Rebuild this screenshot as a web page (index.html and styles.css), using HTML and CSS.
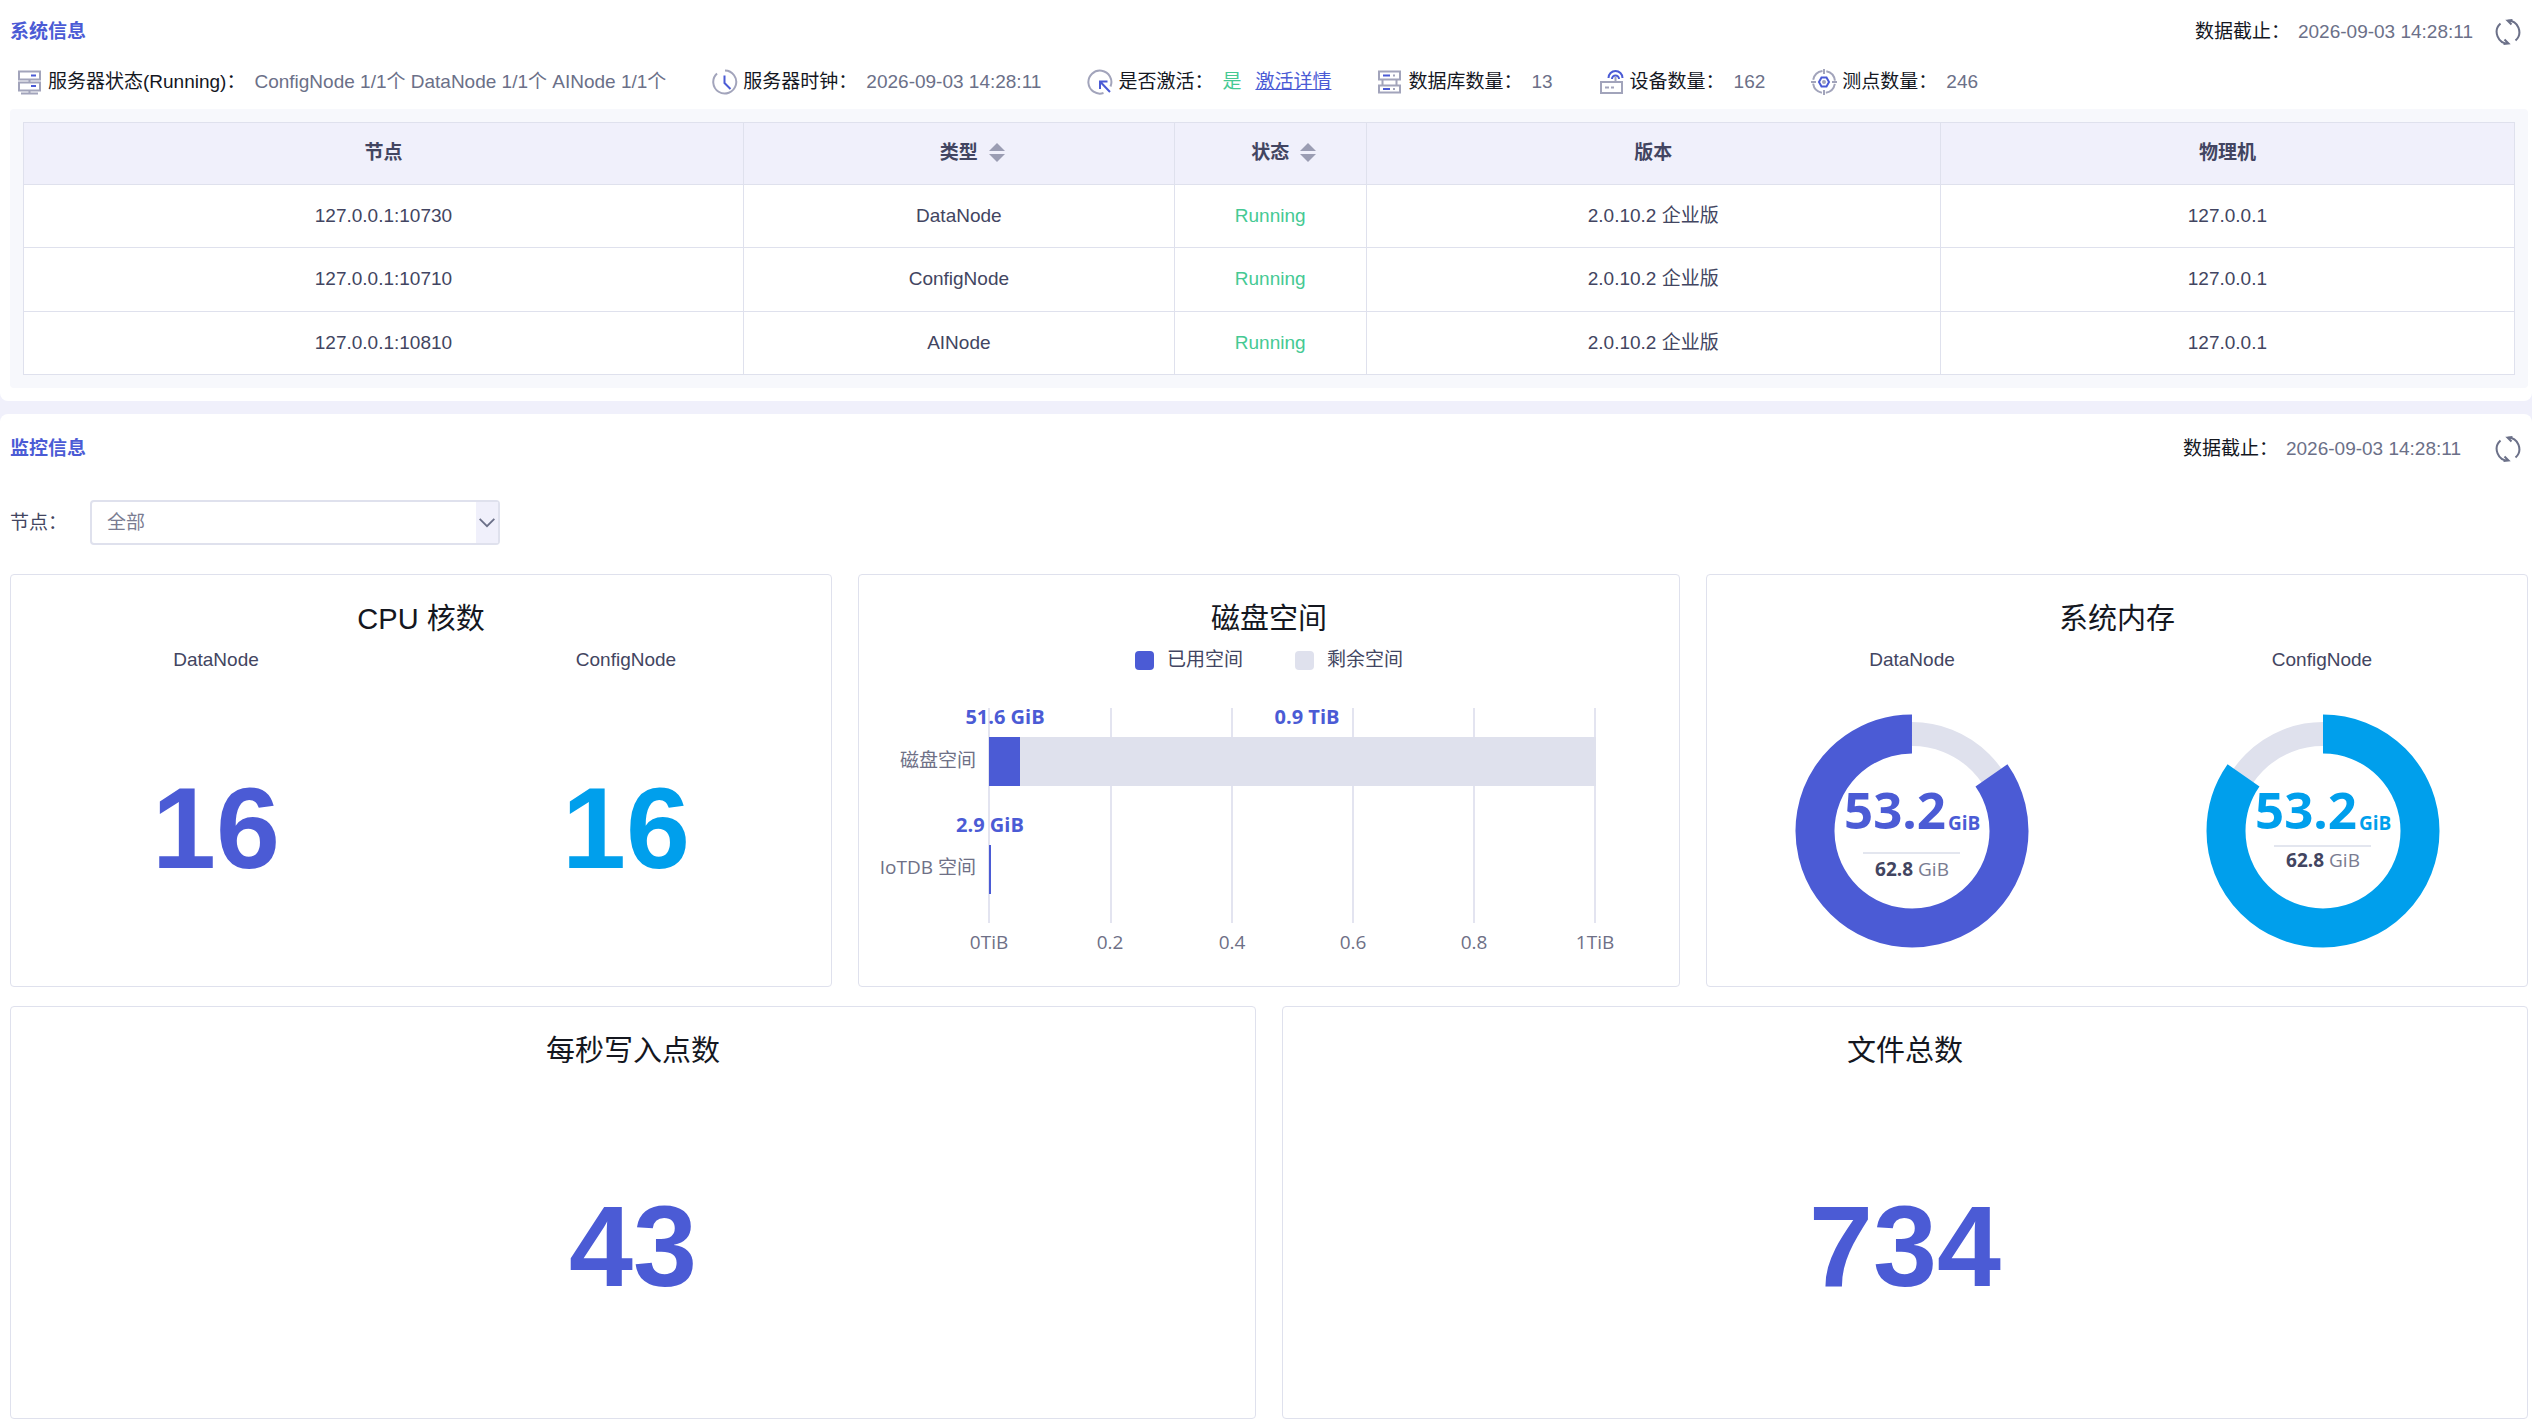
FILE: index.html
```html
<!DOCTYPE html>
<html lang="zh-CN">
<head>
  <meta charset="UTF-8">
  <meta name="viewport" content="width=device-width, initial-scale=1.0">
  <title>系统监控</title>
  <link rel="stylesheet" href="styles.css">
</head>
<body>
  <section class="panel system">
    <div class="panel-head">
      <h2>系统信息</h2>
      <div class="deadline">
        <span class="label">数据截止：</span>
        <span class="value">2026-09-03 14:28:11</span>
        <button class="refresh" type="button" aria-label="刷新">
          <svg viewBox="0 0 26 26"><path d="M5.500 4.500A11.500 11.500 0 0 0 13.500 24.500M9.500 20.500l4 4-5 .5M20.500 21.500A11.500 11.500 0 0 0 12.500 1.500M16.500 5.500l-4-4 5-.5"/></svg>
        </button>
      </div>
    </div>

    <ul class="info">
      <li>
        <svg class="icon" viewBox="0 0 26 26"><path d="M2 2.500h21v8H2zM2 13.500h21v8H2zM12.500 10.500v3M12.500 21.500v3M4 24.500h17"/><path class="accent" d="M14 6.500h5M14 17h5"/></svg>
        <span class="label">服务器状态(Running)：</span>
        <span class="value">ConfigNode 1/1个 DataNode 1/1个 AINode 1/1个</span>
      </li>
      <li>
        <svg class="icon" viewBox="0 0 26 26"><path d="M13 1.500A11.500 11.500 0 1 1 5 4.500"/><path class="accent" d="M12.500 6.500v7.500l6 6"/></svg>
        <span class="label">服务器时钟：</span>
        <span class="value">2026-09-03 14:28:11</span>
      </li>
      <li>
        <svg class="icon" viewBox="0 0 26 26"><path d="M23.500 17.500A11.500 11.500 0 1 0 16.500 24"/><path class="accent" d="M13 20v-7.500h7.500M13 12.500l10 10.500"/></svg>
        <span class="label">是否激活：</span>
        <span class="value ok">是</span>
        <a class="detail" href="#">激活详情</a>
      </li>
      <li>
        <svg class="icon" viewBox="0 0 26 26"><path d="M2 2.500h21v8H2zM2 16.500h21v7H2zM5.500 10.500v6M19.500 10.500v6M16 6.500h2M16 20h2"/><path class="accent" d="M6 6.500h7M6 20h7"/></svg>
        <span class="label">数据库数量：</span>
        <span class="value">13</span>
      </li>
      <li>
        <svg class="icon" viewBox="0 0 26 26"><path d="M2 13h21v11H2zM16.500 13V8M6 18.500h4M12 18.500h3"/><path class="accent" d="M9.500 9a7 7 0 0 1 14 0M13 10a3.500 3.500 0 0 1 7 0"/></svg>
        <span class="label">设备数量：</span>
        <span class="value">162</span>
      </li>
      <li>
        <svg class="icon" viewBox="0 0 26 26"><circle cx="13" cy="13" r="11" stroke-dasharray="13.300 4" stroke-dashoffset="-2"/><path d="M13 0v5M13 21v5M0 13h5M21 13h5"/><path class="accent" d="M10.500 8.500h5l2.500 4.500-2.500 4.500h-5L8 13z"/><circle cx="13" cy="13" r="1"/></svg>
        <span class="label">测点数量：</span>
        <span class="value">246</span>
      </li>
    </ul>

    <div class="table-wrap">
      <table>
        <colgroup>
          <col class="col-node"><col class="col-type"><col class="col-state"><col class="col-version"><col class="col-host">
        </colgroup>
        <thead>
          <tr>
            <th>节点</th>
            <th><button class="sort" type="button">类型<svg viewBox="0 0 16 19"><path d="M8 0l8 8H0zM8 19l8-8H0z"/></svg></button></th>
            <th><button class="sort" type="button">状态<svg viewBox="0 0 16 19"><path d="M8 0l8 8H0zM8 19l8-8H0z"/></svg></button></th>
            <th>版本</th>
            <th>物理机</th>
          </tr>
        </thead>
        <tbody>
          <tr><td>127.0.0.1:10730</td><td>DataNode</td><td class="ok">Running</td><td>2.0.10.2 企业版</td><td>127.0.0.1</td></tr>
          <tr><td>127.0.0.1:10710</td><td>ConfigNode</td><td class="ok">Running</td><td>2.0.10.2 企业版</td><td>127.0.0.1</td></tr>
          <tr><td>127.0.0.1:10810</td><td>AINode</td><td class="ok">Running</td><td>2.0.10.2 企业版</td><td>127.0.0.1</td></tr>
        </tbody>
      </table>
    </div>
  </section>

  <section class="panel monitor">
    <div class="panel-head">
      <h2>监控信息</h2>
      <div class="deadline">
        <span class="label">数据截止：</span>
        <span class="value">2026-09-03 14:28:11</span>
        <button class="refresh" type="button" aria-label="刷新">
          <svg viewBox="0 0 26 26"><path d="M5.500 4.500A11.500 11.500 0 0 0 13.500 24.500M9.500 20.500l4 4-5 .5M20.500 21.500A11.500 11.500 0 0 0 12.500 1.500M16.500 5.500l-4-4 5-.5"/></svg>
        </button>
      </div>
    </div>

    <div class="filter">
      <label for="node">节点：</label>
      <div class="select">
        <select id="node">
          <option>全部</option>
        </select>
        <svg viewBox="0 0 24 42"><path d="M4 17l8 8 8-8"/></svg>
      </div>
    </div>

    <div class="cards three">
      <div class="card">
        <h3>CPU 核数</h3>
        <div class="split">
          <div class="node">
            <span class="node-name">DataNode</span>
            <strong class="number">16</strong>
          </div>
          <div class="node">
            <span class="node-name">ConfigNode</span>
            <strong class="number blue">16</strong>
          </div>
        </div>
      </div>

      <div class="card">
        <h3>磁盘空间</h3>
        <div class="legend">
          <span class="used">已用空间</span>
          <span class="free">剩余空间</span>
        </div>
        <svg class="chart disk" viewBox="0 0 820 280">
          <path class="grid" d="M130 17v215M252 17v215M373 17v215M494 17v215M615 17v215M736 17v215"/>
          <rect class="bar-free" x="161" y="46" width="576" height="49"/>
          <rect class="bar-used" x="130" y="46" width="31" height="49"/>
          <rect class="bar-used" x="130" y="154" width="2" height="49"/>
          <g class="bar-label">
            <text x="146" y="33">51.6 GiB</text>
            <text x="448" y="33">0.9 TiB</text>
            <text x="131" y="141">2.9 GiB</text>
          </g>
          <g class="y-axis">
            <text x="117" y="76">磁盘空间</text>
            <text x="117" y="183">IoTDB 空间</text>
          </g>
          <g class="x-axis">
            <text x="130" y="258">0TiB</text>
            <text x="251" y="258">0.2</text>
            <text x="373" y="258">0.4</text>
            <text x="494" y="258">0.6</text>
            <text x="615" y="258">0.8</text>
            <text x="736" y="258">1TiB</text>
          </g>
        </svg>
      </div>

      <div class="card">
        <h3>系统内存</h3>
        <div class="split">
          <div class="node">
            <span class="node-name">DataNode</span>
            <svg class="chart" viewBox="-205 -140 410 280">
              <circle class="ring-free" r="97"/>
              <circle class="ring-used" r="97" pathLength="360" stroke-dasharray="305 55" transform="rotate(-35)"/>
              <text class="ring-value" x="-68" y="-2">53.2</text>
              <text class="ring-unit" x="36" y="-1">GiB</text>
              <path class="ring-line" d="M-49 22h97"/>
              <text class="ring-total" y="45"><tspan class="total">62.8</tspan> GiB</text>
            </svg>
          </div>
          <div class="node">
            <span class="node-name">ConfigNode</span>
            <svg class="chart blue" viewBox="-206 -140 410 280">
              <circle class="ring-free" r="97"/>
              <circle class="ring-used" r="97" pathLength="360" stroke-dasharray="305 55" transform="rotate(-90)"/>
              <text class="ring-value" x="-68" y="-2">53.2</text>
              <text class="ring-unit" x="36" y="-1">GiB</text>
              <path class="ring-line" d="M-49 15h97"/>
              <text class="ring-total" y="36"><tspan class="total">62.8</tspan> GiB</text>
            </svg>
          </div>
        </div>
      </div>
    </div>

    <div class="cards two">
      <div class="card">
        <h3>每秒写入点数</h3>
        <strong class="number">43</strong>
      </div>
      <div class="card">
        <h3>文件总数</h3>
        <strong class="number">734</strong>
      </div>
    </div>
  </section>
</body>
</html>
```
FILE: styles.css
```css
* {
  box-sizing: border-box;
}
body {
  display: flex;
  flex-direction: column;
  min-height: 100vh;
  margin: 0;
  font-family: "Liberation Sans", Arial, "Noto Sans CJK SC", sans-serif;
  font-size: 19px;
  line-height: 28px;
  color: #424561;
  background-color: #f0f0fb;
}
button, select {
  font: inherit;
  color: inherit;
}
button {
  padding: 0;
  border: none;
  background: none;
  cursor: pointer;
}
svg {
  display: block;
  fill: none;
}
h2, h3 {
  margin: 0;
}

.panel {
  padding: 0 4px 0 10px;
  background-color: #fff;
}
.system {
  padding-bottom: 13px;
  border-radius: 0 0 8px 8px;
}
.monitor {
  flex: 1;
  margin-top: 13px;
  padding-top: 3px;
  padding-bottom: 2px;
  border-radius: 8px 8px 0 0;
}
.panel-head {
  display: flex;
  justify-content: space-between;
  align-items: center;
  height: 64px;
  padding-right: 7px;
}
.panel-head h2 {
  font-size: 19px;
  color: #4b5bd5;
}
.deadline {
  display: flex;
  align-items: center;
  gap: 8px;
}
.label {
  color: #14171f;
}
.value {
  color: #6b7088;
}
.ok {
  color: #45c993;
}
.refresh {
  margin-left: 14px;
}
.monitor .refresh {
  margin-left: 26px;
}
.refresh svg {
  width: 26px;
  height: 26px;
  stroke: #6b7088;
  stroke-width: 2;
}

.info {
  display: flex;
  flex-wrap: wrap;
  gap: 0 46px;
  margin: 0;
  padding: 4px 0 13px 7px;
  list-style: none;
}
.info li {
  display: flex;
  align-items: center;
}
.info .label {
  margin: 0 9px 0 5px;
}
.icon {
  width: 26px;
  height: 26px;
  stroke: #a2a4bb;
  stroke-width: 2;
}
.icon .accent {
  stroke: #4b5bd5;
}
.detail {
  margin-left: 14px;
  color: #4b5bd5;
}

.table-wrap {
  padding: 13px;
  border-radius: 4px;
  background-color: #f7f8fc;
}
table {
  width: 100%;
  height: 253px;
  table-layout: fixed;
  border-collapse: collapse;
  background-color: #fff;
}
.col-node {
  width: 28.9%;
}
.col-type {
  width: 17.3%;
}
.col-state {
  width: 7.7%;
}
th, td {
  padding: 0;
  border: 1px solid #dfe1ed;
  text-align: center;
}
th {
  height: 62px;
  padding-bottom: 2px;
  background-color: #f0f0fb;
}
.sort {
  display: inline-flex;
  align-items: center;
  gap: 11px;
  font-weight: bold;
}
.sort svg {
  width: 16px;
  height: 19px;
  margin-right: -27px;
  fill: #9b9db3;
}

.filter {
  display: flex;
  align-items: center;
  gap: 23px;
  margin: 19px 0 29px;
}
.select {
  position: relative;
  width: 410px;
}
.select select {
  display: block;
  width: 100%;
  height: 45px;
  padding: 0 40px 0 15px;
  border: 2px solid #dfe1ed;
  border-radius: 4px;
  color: #7a7c91;
  background-color: #fff;
  appearance: none;
}
.select svg {
  position: absolute;
  top: 2px;
  right: 2px;
  width: 22px;
  height: 41px;
  background-color: #f0f0fb;
  stroke: #6b7088;
  stroke-width: 2;
  pointer-events: none;
}

.cards {
  display: grid;
  gap: 26px;
}
.three {
  grid-template-columns: repeat(3, 1fr);
}
.two {
  grid-template-columns: repeat(2, 1fr);
  margin-top: 19px;
}
.card {
  display: flex;
  flex-direction: column;
  min-width: 0;
  min-height: 413px;
  padding-top: 24px;
  border: 1px solid #dfe1ed;
  border-radius: 4px;
}
.card h3 {
  font-size: 29px;
  font-weight: normal;
  line-height: 40px;
  text-align: center;
  color: #14171f;
}
.split {
  display: grid;
  grid-template-columns: 1fr 1fr;
  flex: 1;
}
.node {
  display: flex;
  flex-direction: column;
  min-width: 0;
  text-align: center;
}
.node-name, .legend {
  margin-top: 7px;
}
.number {
  margin: auto;
  padding-top: 3px;
  font-size: 115px;
  line-height: 130px;
  color: #4b5bd5;
}
.node .number {
  padding: 0 0 4px;
}
.number.blue {
  color: #009fec;
}

.legend {
  display: flex;
  justify-content: center;
  gap: 52px;
}
.legend span {
  display: flex;
  align-items: center;
  gap: 13px;
}
.legend span::before {
  content: "";
  width: 19px;
  height: 19px;
  border-radius: 4px;
  background-color: #4b5bd5;
}
.legend .free::before {
  background-color: #dfe1ed;
}

.chart {
  width: 100%;
  height: 280px;
  margin-top: 17px;
  font-family: "Open Sans", "Noto Sans CJK SC", sans-serif;
}
.disk text {
  text-anchor: middle;
}
.grid {
  stroke: #e3e4f0;
  stroke-width: 2;
}
.bar-free {
  fill: #dfe1ed;
}
.bar-used {
  fill: #4b5bd5;
}
.bar-label {
  font-size: 20px;
  font-weight: bold;
  fill: #4b5bd5;
}
.y-axis, .x-axis {
  fill: #6e7086;
}
.disk .y-axis text {
  text-anchor: end;
}

.ring-free {
  stroke: #dfe1ed;
  stroke-width: 24;
}
.ring-used {
  stroke: #4b5bd5;
  stroke-width: 39;
}
.ring-value, .ring-unit {
  font-weight: bold;
  fill: #4b5bd5;
}
.ring-value {
  font-size: 51px;
}
.ring-line {
  stroke: #e3e6ef;
  stroke-width: 2;
}
.ring-total {
  text-anchor: middle;
  fill: #7a7c91;
}
.total {
  font-weight: bold;
  fill: #424561;
}
.blue .ring-used {
  stroke: #009fec;
}
.blue .ring-value, .blue .ring-unit {
  fill: #009fec;
}
```
